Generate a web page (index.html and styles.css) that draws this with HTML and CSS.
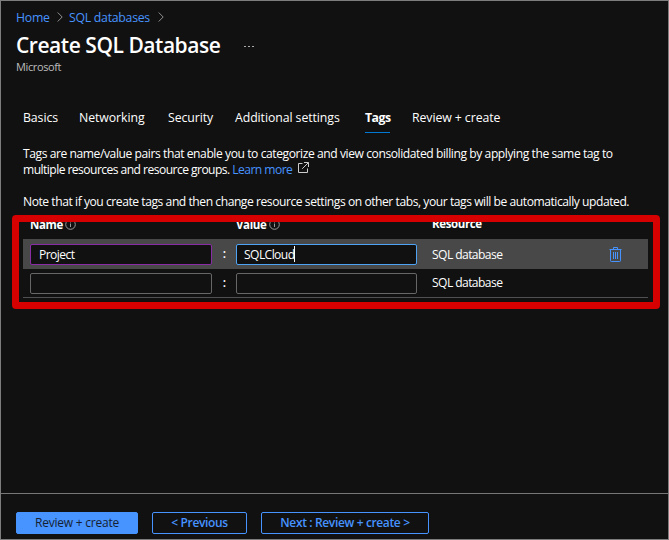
FILE: index.html
```html
<!DOCTYPE html>
<html lang="en">
<head>
<meta charset="utf-8">
<title>Create SQL Database</title>
<link rel="stylesheet" href="styles.css">
</head>
<body>
<div class="page">
  <nav class="crumbs">
    <a class="crumb-home">Home</a>
    <svg width="6" height="10" viewBox="0 0 6 10"><path d="M.7.5 5.2 5 .7 9.5"/></svg>
    <a class="crumb-db">SQL databases</a>
    <svg width="6" height="10" viewBox="0 0 6 10"><path d="M.7.5 5.2 5 .7 9.5"/></svg>
  </nav>
  <header class="heading">
    <h1>Create SQL Database</h1>
    <span class="more"><i></i><i></i><i></i></span>
  </header>
  <div class="publisher">Microsoft</div>
  <div class="tabs">
    <a class="t-basics">Basics</a>
    <a class="t-net">Networking</a>
    <a class="t-sec">Security</a>
    <a class="t-add">Additional settings</a>
    <a class="t-tags active">Tags</a>
    <a class="t-rev">Review + create</a>
  </div>
  <div class="intro">
    <p><span class="l1">Tags are name/value pairs that enable you to categorize and view consolidated billing by applying the same tag to</span><br><span class="l2">multiple resources and resource groups. <a>Learn more</a></span><svg class="ext" width="11" height="11" viewBox="0 0 11 11"><path d="M4.500 1.500h-4v9h9v-4M6 .5h4.500v4.500M10.300.700 4.200 6.800"/></svg></p>
    <p><span class="l3">Note that if you create tags and then change resource settings on other tabs, your tags will be automatically updated.</span></p>
  </div>
  <section class="tags">
    <div class="row head">
      <div class="cell">Name <svg width="11" height="11" viewBox="0 0 11 11"><circle cx="5.500" cy="5.500" r="4.800"/><path d="M5.500 4.500v3.500M5.500 2.500v1"/></svg></div>
      <div></div>
      <div class="cell">Value <svg width="11" height="11" viewBox="0 0 11 11"><circle cx="5.500" cy="5.500" r="4.800"/><path d="M5.500 4.500v3.500M5.500 2.500v1"/></svg></div>
      <div class="cell res">Resource</div>
    </div>
    <div class="row selected">
      <div class="field edited"><span class="v1">Project</span></div>
      <div class="colon">:</div>
      <div class="field focused"><span class="v2">SQLCloud</span><i class="caret"></i></div>
      <div class="res"><span>SQL database</span></div>
      <svg class="trash" width="13" height="15" viewBox="0 0 13 15"><path d="M.5 2.500h12M4.500 2.500v-2h4v2M1.500 2.500v11.200q0 .8.8.8h8.400q.8 0 .8-.8V2.500M4.500 5v7M6.500 5v7M8.500 5v7"/></svg>
    </div>
    <div class="row second">
      <div class="field"></div>
      <div class="colon">:</div>
      <div class="field"></div>
      <div class="res"><span>SQL database</span></div>
    </div>
    <div class="highlight"></div>
  </section>
  <footer>
    <button class="primary"><span>Review + create</span></button>
    <button class="prev"><span>&lt; Previous</span></button>
    <button class="next"><span>Next : Review + create &gt;</span></button>
  </footer>
</div>
</body>
</html>
```
FILE: styles.css
```css
* { box-sizing: border-box; }
body { margin: 0; background: #111; }
.page {
  width: 669px; height: 540px;
  display: flex; flex-direction: column;
  border: 1px solid #7d7d7d;
  background: #111; color: #fff;
  font: 12.3px/16px "Open Sans", "Noto Sans", sans-serif;
  white-space: nowrap;
  overflow: hidden;
}
svg { fill: none; flex: none; }
a { color: #4793ff; }
.crumbs { display: flex; align-items: center; height: 16px; margin: 8px 0 0 15px; letter-spacing: -.27px; }
.crumbs svg { stroke: #909090; margin: 0 6px 0 8px; }
.crumbs a { padding-top: 1px; }
.crumb-home { width: 33px; }
.crumb-db { width: 81px; }
.heading { display: flex; align-items: center; height: 28px; margin: 6px 0 0 15px; }
h1 { width: 228px; margin: 0; font-size: 21px; line-height: 28px; font-weight: 600; letter-spacing: -.46px; }
.more { display: flex; gap: 2px; padding-top: 3px; }
.more i { width: 2px; height: 1px; background: #aaa; }
.publisher { height: 16px; margin: 0 0 0 15px; font-size: 11px; letter-spacing: -.38px; color: #bdbdbd; }
.tabs { display: flex; height: 24px; margin: 34px 0 0 22px; padding-top: 1px; letter-spacing: -.08px; }
.tabs a { color: #fff; }
.t-basics { width: 56px; }
.t-net { width: 89px; }
.t-sec { width: 67px; }
.t-add { width: 130px; }
.tabs .t-tags { width: 25px; margin-right: 22px; font-weight: 700; letter-spacing: -.5px; border-bottom: 1px solid #0078d4; }
.intro { margin: 13px 0 0 22px; height: 64px; font-size: 12.1px; letter-spacing: -.43px; }
.intro p { margin: 0 0 16px; }
.l2 { letter-spacing: -.55px; }
.l3 { letter-spacing: -.45px; }
.ext { margin-left: 6px; stroke: #ccc; vertical-align: 1px; }
.tags { position: relative; margin: 5px 20px 0 22px; height: 83px; border-bottom: 1px solid #505050; }
.row { display: grid; grid-template-columns: 182px 24px 181px 15px 177px 1fr; align-items: center; padding-left: 7px; font-size: 12.1px; letter-spacing: -.58px; }
.head { height: 24px; padding-bottom: 4px; font-weight: 700; font-size: 11.500px; letter-spacing: -.38px; }
.head .res { margin-top: -2px; }
.head svg { stroke: #999; margin-left: 0; vertical-align: -1px; }
.res { grid-column: 5; }
.selected { height: 30px; background: #484848; }
.selected .res { padding-top: 1px; }
.second { height: 28px; }
.colon { text-align: center; font-weight: 600; }
.field { display: flex; align-items: center; height: 21px; padding-left: 8px; background: #111; border: 1px solid #666; border-radius: 2px; }
.field span { padding-top: 1px; }
.edited { border-color: #8a2da5; }
.focused { border-color: #4fa3f5; padding-left: 7px; }
.caret { width: 1px; height: 16px; background: #fff; }
.trash { stroke: #4793ff; margin-left: 0; }
.highlight { position: absolute; left: -11px; top: 0; width: 648px; height: 94px; border: 7px solid #d60000; border-radius: 4px; }
footer { display: flex; gap: 14px; margin-top: auto; height: 46px; padding: 18px 0 0 15px; border-top: 1px solid #777; }
button { height: 22px; padding: 0; border: 1px solid #4793ff; border-radius: 2px; background: #111; color: #4793ff; font: 600 12px/20px "Open Sans", "Noto Sans", sans-serif; letter-spacing: -.36px; }
.primary { width: 122px; background: #4793ff; color: #151f30; font-weight: 400; letter-spacing: -.22px; }
.prev { width: 95px; }
.next { width: 168px; }
```
